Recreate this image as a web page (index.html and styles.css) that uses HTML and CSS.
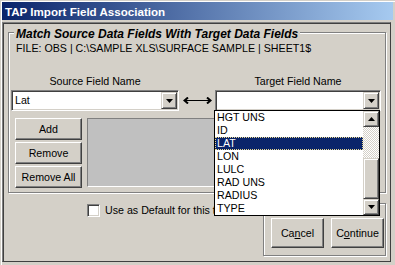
FILE: index.html
```html
<!DOCTYPE html>
<html lang="en">
<head>
    <meta charset="UTF-8">
    <title>TAP Import Field Association</title>
    <link rel="stylesheet" href="styles.css">
</head>
<body>
    <div class="window">
        <div class="titlebar">TAP Import Field Association</div>
        <div class="panel">
            <div class="frame">
                <div class="frame-title">Match Source Data Fields With Target Data Fields</div>
                <div class="file-line">FILE: OBS | C:\SAMPLE XLS\SURFACE SAMPLE | SHEET1$</div>
                <div class="fields">
                    <div class="field-label">Source Field Name</div>
                    <div></div>
                    <div class="field-label">Target Field Name</div>
                    <div class="combo">
                        <span class="combo-text">Lat</span>
                        <span class="drop-btn">
                            <svg width="7" height="4" viewBox="0 0 7 4"><path d="M0 0H7L3.5 4Z" fill="#000"/></svg>
                        </span>
                    </div>
                    <div class="link-arrow">
                        <svg width="29" height="7" viewBox="0 0 29 7">
                            <path d="M5 0.5L1.5 3.5L5 6.5M24 0.5L27.5 3.5L24 6.5" fill="none" stroke="#000" stroke-width="2"/>
                            <path d="M2 3.5H27" stroke="#000" stroke-width="1"/>
                        </svg>
                    </div>
                    <div class="combo target">
                        <span class="combo-text"></span>
                        <span class="drop-btn">
                            <svg width="7" height="4" viewBox="0 0 7 4"><path d="M0 0H7L3.5 4Z" fill="#000"/></svg>
                        </span>
                        <div class="droplist">
                            <ul class="items">
                                <li>HGT UNS</li>
                                <li>ID</li>
                                <li class="selected">LAT</li>
                                <li>LON</li>
                                <li>LULC</li>
                                <li>RAD UNS</li>
                                <li>RADIUS</li>
                                <li>TYPE</li>
                            </ul>
                            <div class="scrollbar">
                                <span class="scroll-btn">
                                    <svg width="7" height="4" viewBox="0 0 7 4"><path d="M3.5 0L7 4H0Z" fill="#000"/></svg>
                                </span>
                                <span class="scroll-track"></span>
                                <span class="scroll-thumb"></span>
                                <span class="scroll-btn">
                                    <svg width="7" height="4" viewBox="0 0 7 4"><path d="M0 0H7L3.5 4Z" fill="#000"/></svg>
                                </span>
                            </div>
                        </div>
                    </div>
                </div>
                <div class="mapping">
                    <div class="actions">
                        <button class="btn">Add</button>
                        <button class="btn">Remove</button>
                        <button class="btn">Remove All</button>
                    </div>
                    <div class="map-list"></div>
                </div>
            </div>
            <div class="bottom">
                <label class="default-check">
                    <span class="checkbox"></span>
                    <span class="check-text">Use as Default for this template</span>
                </label>
                <div class="button-frame">
                    <button class="btn big">Ca<u>n</u>cel</button>
                    <button class="btn big">C<u>o</u>ntinue</button>
                </div>
            </div>
        </div>
    </div>
</body>
</html>
```

FILE: styles.css
```css
body {
    margin: 0;
    background: #D4D0C8;
    font-family: "Liberation Sans", Arial, sans-serif;
    font-size: 10.67px;
    color: #000;
}
.window {
    margin: 1px 0 0 1px;
    border-left: 1px solid #fff;
    border-top: 1px solid #fff;
    width: 393px;
    height: 263px;
}
.titlebar {
    width: 388px;
    height: 17px;
    padding: 1px 0 0 3px;
    line-height: 17px;
    background: linear-gradient(to right, #0A246A, #A6CAF0);
    color: #fff;
    font-weight: bold;
    font-size: 11.6px;
    white-space: nowrap;
}
.panel {
    margin-top: 2px;
    width: 387px;
    height: 238px;
    border: 1px solid;
    border-color: #808080 #404040 #404040 #808080;
    box-shadow: inset 1px 1px 0 #404040;
}
.frame {
    margin: 9px 0 0 5px;
    width: 376px;
    height: 159px;
    border: 1px solid #808080;
    box-shadow: inset 1px 1px 0 #fff, 1px 1px 0 #fff;
    display: flex;
    flex-direction: column;
    align-items: flex-start;
}
.frame-title {
    margin: -6px 0 0 5px;
    padding: 0 2px;
    background: #D4D0C8;
    font-size: 12px;
    line-height: 14px;
    font-weight: bold;
    font-style: italic;
    white-space: nowrap;
}
.file-line {
    margin: 1px 0 0 7px;
    line-height: 13px;
    white-space: nowrap;
}
.fields {
    margin: 20px 0 0 2px;
    display: grid;
    grid-template-columns: 168px 36px 166px;
    grid-template-rows: 13px 21px;
    row-gap: 2px;
}
.field-label {
    text-align: center;
    line-height: 13px;
    white-space: nowrap;
}
.combo {
    position: relative;
    display: flex;
    padding: 1px;
    border: 1px solid;
    border-color: #808080 #fff #fff #808080;
    box-shadow: inset 1px 1px 0 #404040, inset -1px -1px 0 #D4D0C8;
    background: #fff;
}
.combo-text {
    flex: 1;
    padding-left: 2px;
    line-height: 17px;
}
.drop-btn,
.scroll-btn {
    width: 14px;
    height: 15px;
    border: 1px solid;
    border-color: #D4D0C8 #404040 #404040 #D4D0C8;
    box-shadow: inset 1px 1px 0 #fff, inset -1px -1px 0 #808080;
    background: #D4D0C8;
    display: flex;
    align-items: center;
    justify-content: center;
}
.drop-btn svg,
.scroll-btn svg {
    display: block;
}
.link-arrow {
    align-self: center;
    display: flex;
    justify-content: center;
}
.link-arrow svg {
    display: block;
}
.droplist {
    position: absolute;
    left: -2px;
    top: 19px;
    width: 164px;
    height: 104px;
    border: 1px solid #000;
    background: #fff;
    display: flex;
    z-index: 2;
}
.items {
    flex: 1;
    margin: 0;
    padding: 0;
    list-style: none;
}
.items li {
    height: 13px;
    line-height: 13px;
    padding-left: 2px;
    white-space: nowrap;
}
.items li.selected {
    background: #0A246A;
    color: #fff;
    outline: 1px dotted #E8D890;
    outline-offset: -1px;
}
.scrollbar {
    width: 16px;
    display: flex;
    flex-direction: column;
}
.scrollbar .scroll-btn {
    height: 14px;
}
.scroll-track {
    height: 31px;
    background: repeating-conic-gradient(#fff 0 25%, #D4D0C8 0 50%) 0 0 / 2px 2px;
}
.scroll-thumb {
    height: 39px;
    border: 1px solid;
    border-color: #D4D0C8 #404040 #404040 #D4D0C8;
    box-shadow: inset 1px 1px 0 #fff, inset -1px -1px 0 #808080;
    background: #D4D0C8;
}
.mapping {
    margin: 7px 0 0 6px;
    display: flex;
}
.actions {
    display: flex;
    flex-direction: column;
    gap: 2px;
}
.btn {
    margin: 0;
    padding: 0;
    width: 67px;
    height: 22px;
    border: 1px solid;
    border-color: #fff #404040 #404040 #fff;
    box-shadow: inset -1px -1px 0 #808080;
    background: #D4D0C8;
    font: inherit;
    color: #000;
    text-align: center;
}
.map-list {
    margin-left: 5px;
    width: 198px;
    height: 67px;
    border: 1px solid;
    border-color: #808080 #fff #fff #808080;
    background: #C0C0C0;
}
.bottom {
    display: flex;
    align-items: flex-start;
}
.default-check {
    margin: 11px 48px 0 84px;
    width: 128px;
    display: flex;
    align-items: center;
    gap: 5px;
    line-height: 13px;
    white-space: nowrap;
    overflow: hidden;
}
.checkbox {
    flex: none;
    width: 11px;
    height: 11px;
    border: 1px solid;
    border-color: #808080 #fff #fff #808080;
    box-shadow: inset 1px 1px 0 #404040, inset -1px -1px 0 #D4D0C8;
    background: #fff;
}
.check-text {
    overflow: hidden;
}
.button-frame {
    margin-top: 10px;
    width: 114px;
    height: 37px;
    padding: 14px 0 0 7px;
    border: 1px solid #808080;
    box-shadow: inset 1px 1px 0 #fff, 1px 1px 0 #fff;
    display: flex;
    gap: 7px;
}
.btn.big {
    width: 53px;
    height: 30px;
}
```
